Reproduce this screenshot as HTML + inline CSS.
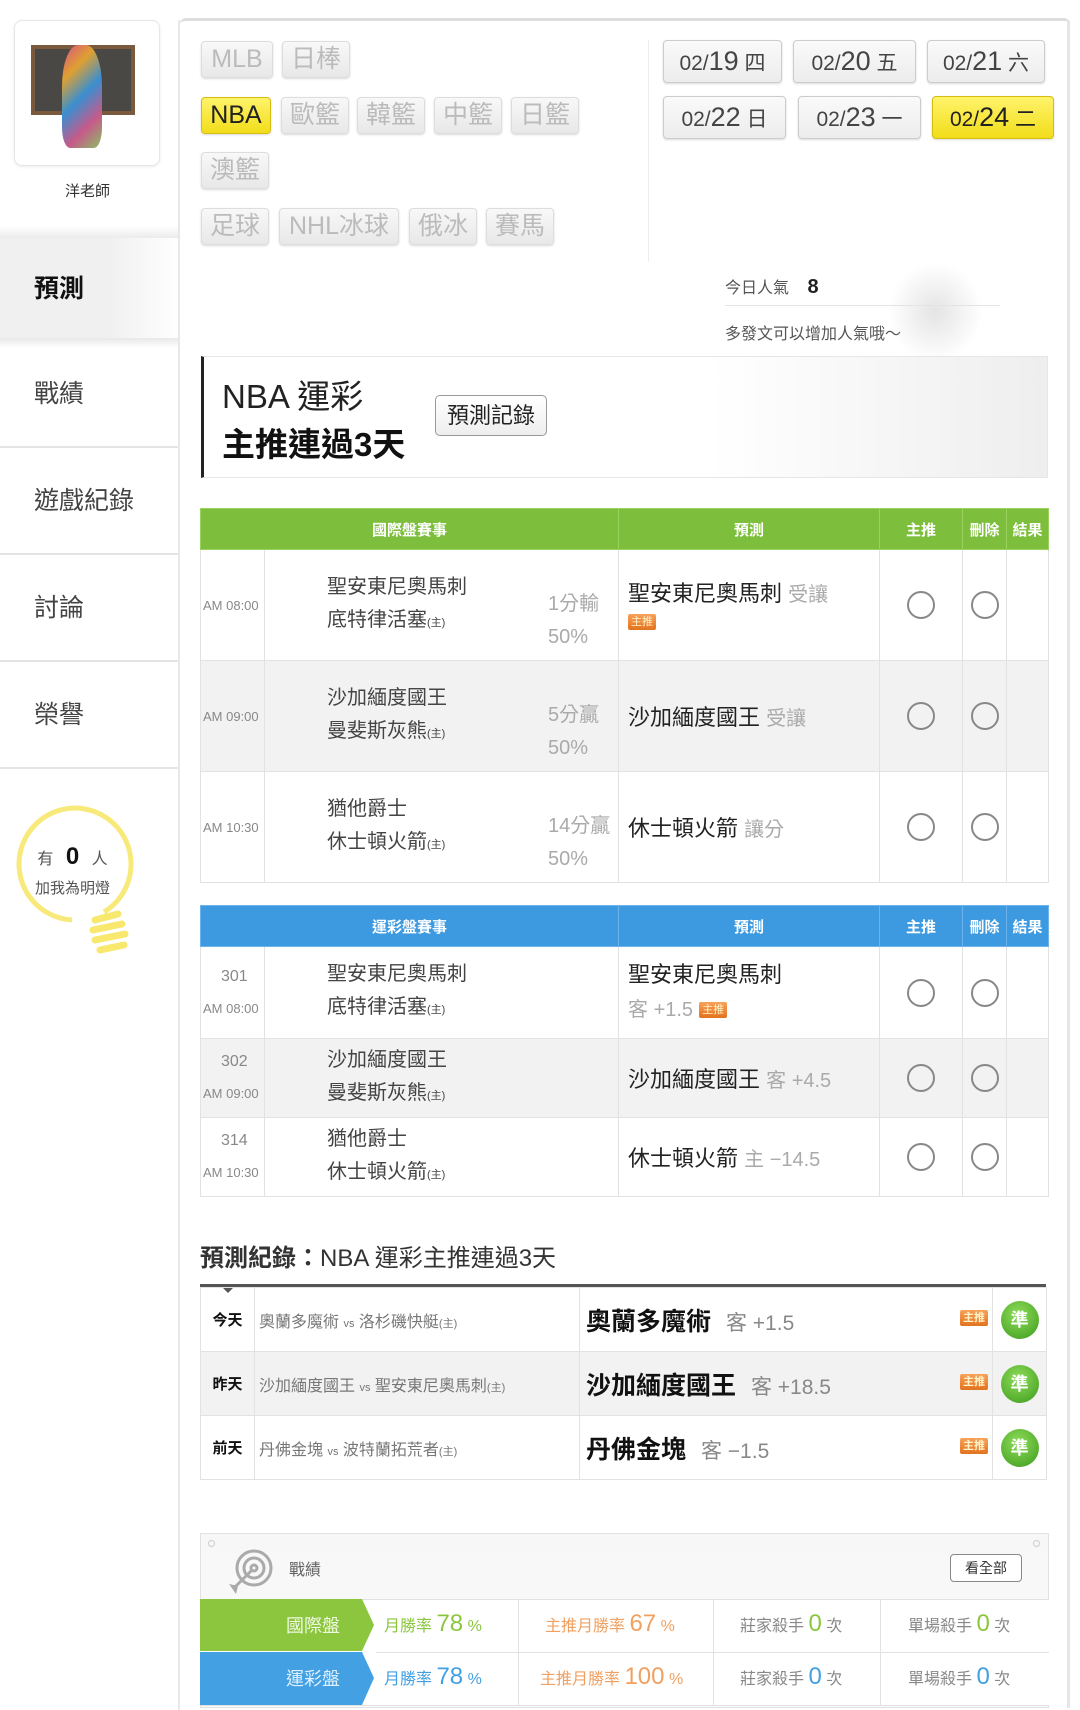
<!DOCTYPE html>
<html><head><meta charset="utf-8">
<style>
*{margin:0;padding:0;box-sizing:border-box}
body{width:1080px;height:1708px;background:#fff;font-family:"Liberation Sans","Noto Sans CJK TC",sans-serif;color:#333;position:relative;overflow:hidden}
.a{position:absolute}
.btn{position:absolute;height:37px;border:1px solid #ddd;border-radius:4px;background:linear-gradient(#f8f8f8,#e8e8e8);color:#bbb;font-size:25px;line-height:35px;text-align:center;box-shadow:0 1px 2px rgba(0,0,0,.15)}
.dt{position:absolute;height:43px;border:1px solid #ccc;border-radius:4px;background:linear-gradient(#fafafa,#ececec);color:#444;font-size:21px;line-height:41px;text-align:center;box-shadow:0 1px 2px rgba(0,0,0,.15)}
.dt b{font-size:27px;font-weight:normal}
.yel{background:linear-gradient(#fff36a,#f2dd1a)!important;border-color:#d4bd10!important;color:#222!important}
.side{position:absolute;left:0;width:180px;height:105px;border-bottom:2px solid #e4e4e4;font-size:25px;color:#444;padding-left:34px;line-height:103px}
table{border-collapse:collapse;position:absolute;left:200px;width:848px;table-layout:fixed}
td,th{border:1px solid #e2e2e2}
th{color:#fff;font-size:15px;font-weight:bold;height:41px}
.g th{background:#7dbf3c;border-color:#9ad15f}
.b th{background:#3e9ae0;border-color:#6bb3ea}
.tm{font-size:13px;color:#888;padding-left:2px}
.tn{font-size:20px;color:#444;line-height:33px;padding-left:62px;position:relative}
.tn small{font-size:11px}
.sc{position:absolute;left:283px;font-size:20px;color:#aaa;line-height:33px}
.pr{font-size:22px;color:#222;padding-left:9px}
.pr span{color:#aaa;font-size:20px}
.circ{width:28px;height:28px;border:2px solid #888;border-radius:50%;margin:auto}
.gy{background:#f2f2f2}
.tag{display:inline-block;background:linear-gradient(#f7a15a,#e2731e);color:#fff3c8!important;font-size:11px!important;line-height:14px;padding:1px 3px;border-radius:2px;vertical-align:middle}
</style></head><body>

<!-- avatar -->
<div class="a" style="left:14px;top:20px;width:146px;height:146px;border:1px solid #e6e6e6;border-radius:8px;box-shadow:0 1px 3px rgba(0,0,0,.08)"></div>
<div class="a" style="left:31px;top:45px;width:104px;height:70px;background:#4a4844;border:4px solid #7a5a3c"></div>
<div class="a" style="left:62px;top:45px;width:40px;height:103px;border-radius:40% 40% 20% 20%;background:linear-gradient(135deg,#d84f8a,#e0a030,#3a8fd0,#c75a8a,#88c060)"></div>
<div class="a" style="left:0;top:180px;width:175px;text-align:center;font-size:15px;color:#333">洋老師</div>

<!-- sidebar -->
<div class="a" style="left:0;top:226px;width:180px;height:14px;background:linear-gradient(#fff,#e8e8e8)"></div>
<div class="side" style="top:238px;background:linear-gradient(90deg,#f0f0f0 60%,#fff);font-weight:bold;color:#111;border-bottom:none">預測</div>
<div class="a" style="left:0;top:338px;width:180px;height:10px;background:linear-gradient(#e8e8e8,#fff)"></div>
<div class="side" style="top:343px">戰績</div>
<div class="side" style="top:450px">遊戲紀錄</div>
<div class="side" style="top:557px">討論</div>
<div class="side" style="top:664px">榮譽</div>
<div class="a" style="left:178px;top:20px;width:2px;height:1690px;background:#e8e8e8"></div>

<!-- bulb -->
<svg class="a" style="left:0;top:800px" width="180" height="170">
<path d="M72 120 A56 56 0 1 1 104 112" fill="none" stroke="#f8ea7a" stroke-width="5"/>
<g stroke="#f8e86e" stroke-width="7" stroke-linecap="round">
<line x1="95" y1="120" x2="118" y2="114"/><line x1="93" y1="130" x2="122" y2="124"/><line x1="95" y1="140" x2="125" y2="134"/><line x1="100" y1="150" x2="124" y2="145"/></g>
</svg>
<div class="a" style="left:0;top:843px;width:145px;text-align:center;font-size:16px;color:#555">有 <b style="font-size:24px;color:#111;margin:0 8px">0</b> 人</div>
<div class="a" style="left:0;top:877px;width:145px;text-align:center;font-size:15px;color:#555">加我為明燈</div>

<!-- main panel top border -->
<div class="a" style="left:180px;top:18px;width:890px;height:8px;border-top:3px solid #ddd;border-radius:6px 6px 0 0"></div>
<div class="a" style="left:1067px;top:20px;width:3px;height:1688px;background:#e6e6e6"></div>

<!-- sport buttons -->
<div class="btn" style="left:201px;top:41px;width:72px">MLB</div>
<div class="btn" style="left:282px;top:41px;width:68px">日棒</div>
<div class="btn yel" style="left:201px;top:97px;width:70px">NBA</div>
<div class="btn" style="left:281px;top:97px;width:68px">歐籃</div>
<div class="btn" style="left:357px;top:97px;width:68px">韓籃</div>
<div class="btn" style="left:434px;top:97px;width:68px">中籃</div>
<div class="btn" style="left:511px;top:97px;width:68px">日籃</div>
<div class="btn" style="left:201px;top:152px;width:68px">澳籃</div>
<div class="btn" style="left:201px;top:208px;width:68px">足球</div>
<div class="btn" style="left:279px;top:208px;width:120px">NHL冰球</div>
<div class="btn" style="left:409px;top:208px;width:68px">俄冰</div>
<div class="btn" style="left:486px;top:208px;width:68px">賽馬</div>
<div class="a" style="left:648px;top:40px;width:1px;height:222px;background:#eee"></div>

<!-- dates -->
<div class="dt" style="left:663px;top:40px;width:119px">02/<b>19</b> 四</div>
<div class="dt" style="left:793px;top:40px;width:123px">02/<b>20</b> 五</div>
<div class="dt" style="left:927px;top:40px;width:118px">02/<b>21</b> 六</div>
<div class="dt" style="left:663px;top:96px;width:123px">02/<b>22</b> 日</div>
<div class="dt" style="left:798px;top:96px;width:123px">02/<b>23</b> 一</div>
<div class="dt yel" style="left:932px;top:96px;width:122px">02/<b>24</b> 二</div>

<!-- popularity -->
<div class="a" style="left:725px;top:274px;font-size:16px;color:#555">今日人氣 <b style="font-size:20px;color:#222;margin-left:14px">8</b></div>
<div class="a" style="left:725px;top:305px;width:275px;height:1px;background:#e4e4e4"></div>
<div class="a" style="left:725px;top:320px;font-size:16px;color:#555">多發文可以增加人氣哦～</div>
<div class="a" style="left:888px;top:262px;width:95px;height:100px;border-radius:50%;background:radial-gradient(#e4e4e4,rgba(255,255,255,0) 70%)"></div>

<!-- NBA banner -->
<div class="a" style="left:201px;top:356px;width:847px;height:122px;border:1px solid #e6e6e6;border-left:3px solid #222;background:linear-gradient(90deg,#fff 60%,#eee)"></div>
<div class="a" style="left:222px;top:370px;font-size:33px;color:#222">NBA 運彩</div>
<div class="a" style="left:222px;top:418px;font-size:33px;color:#111;font-weight:bold">主推連過3天</div>
<div class="a" style="left:435px;top:395px;width:112px;height:41px;border:1px solid #999;border-radius:5px;background:linear-gradient(#fff,#eee);font-size:22px;line-height:39px;text-align:center;color:#222">預測記錄</div>

<!-- table 1 -->
<table class="g" style="top:508px">
<colgroup><col style="width:64px"><col style="width:354px"><col style="width:261px"><col style="width:83px"><col style="width:44px"><col style="width:42px"></colgroup>
<tr><th colspan="2">國際盤賽事</th><th>預測</th><th>主推</th><th>刪除</th><th>結果</th></tr>
<tr style="height:111px"><td class="tm">AM 08:00</td><td class="tn">聖安東尼奧馬刺<br>底特律活塞<small>(主)</small><div class="sc" style="top:38px">1分輸<br>50%</div></td><td class="pr">聖安東尼奧馬刺 <span>受讓</span><br><span class="tag">主推</span></td><td><div class="circ"></div></td><td><div class="circ"></div></td><td></td></tr>
<tr class="gy" style="height:111px"><td class="tm">AM 09:00</td><td class="tn">沙加緬度國王<br>曼斐斯灰熊<small>(主)</small><div class="sc" style="top:38px">5分贏<br>50%</div></td><td class="pr">沙加緬度國王 <span>受讓</span></td><td><div class="circ"></div></td><td><div class="circ"></div></td><td></td></tr>
<tr style="height:111px"><td class="tm">AM 10:30</td><td class="tn">猶他爵士<br>休士頓火箭<small>(主)</small><div class="sc" style="top:38px">14分贏<br>50%</div></td><td class="pr">休士頓火箭 <span>讓分</span></td><td><div class="circ"></div></td><td><div class="circ"></div></td><td></td></tr>
</table>

<!-- table 2 -->
<table class="b" style="top:905px">
<colgroup><col style="width:64px"><col style="width:354px"><col style="width:261px"><col style="width:83px"><col style="width:44px"><col style="width:42px"></colgroup>
<tr><th colspan="2">運彩盤賽事</th><th>預測</th><th>主推</th><th>刪除</th><th>結果</th></tr>
<tr style="height:92px"><td class="tm" style="line-height:32px"><span style="font-size:16px;padding-left:18px">301</span><br>AM 08:00</td><td class="tn">聖安東尼奧馬刺<br>底特律活塞<small>(主)</small></td><td class="pr" style="line-height:34px">聖安東尼奧馬刺<br><span>客 +1.5</span> <span class="tag">主推</span></td><td><div class="circ"></div></td><td><div class="circ"></div></td><td></td></tr>
<tr class="gy" style="height:79px"><td class="tm" style="line-height:32px"><span style="font-size:16px;padding-left:18px">302</span><br>AM 09:00</td><td class="tn">沙加緬度國王<br>曼斐斯灰熊<small>(主)</small></td><td class="pr">沙加緬度國王 <span>客 +4.5</span></td><td><div class="circ"></div></td><td><div class="circ"></div></td><td></td></tr>
<tr style="height:79px"><td class="tm" style="line-height:32px"><span style="font-size:16px;padding-left:18px">314</span><br>AM 10:30</td><td class="tn">猶他爵士<br>休士頓火箭<small>(主)</small></td><td class="pr">休士頓火箭 <span>主 −14.5</span></td><td><div class="circ"></div></td><td><div class="circ"></div></td><td></td></tr>
</table>

<!-- record -->
<div class="a" style="left:200px;top:1238px;font-size:24px;color:#333"><b>預測紀錄：</b>NBA 運彩主推連過3天</div>
<div class="a" style="left:200px;top:1284px;width:846px;height:3px;background:#555"></div>
<div class="a" style="left:222px;top:1287px;width:0;height:0;border:6px solid transparent;border-top-color:#555"></div>
<table style="top:1287px;width:846px">
<colgroup><col style="width:54px"><col style="width:325px"><col style="width:413px"><col style="width:54px"></colgroup>
<tr style="height:64px"><td style="font-size:15px;font-weight:bold;text-align:center;color:#111">今天</td><td style="font-size:16px;color:#777;padding-left:4px">奧蘭多魔術 <small style="font-size:11px">vs</small> 洛杉磯快艇<small style="font-size:11px">(主)</small></td><td style="font-size:25px;font-weight:bold;color:#111;padding-left:6px;position:relative">奧蘭多魔術 <span style="font-weight:normal;color:#888;font-size:21px;margin-left:8px">客 +1.5</span><span class="tag" style="position:absolute;right:4px;top:22px">主推</span></td><td><div style="width:38px;height:38px;border-radius:50%;background:radial-gradient(circle at 45% 35%,#8fdc5a,#3d9a1c);margin:auto;color:#fff;text-align:center;line-height:38px;font-size:18px;font-weight:bold">準</div></td></tr>
<tr class="gy" style="height:64px"><td style="font-size:15px;font-weight:bold;text-align:center;color:#111">昨天</td><td style="font-size:16px;color:#777;padding-left:4px">沙加緬度國王 <small style="font-size:11px">vs</small> 聖安東尼奧馬刺<small style="font-size:11px">(主)</small></td><td style="font-size:25px;font-weight:bold;color:#111;padding-left:6px;position:relative">沙加緬度國王 <span style="font-weight:normal;color:#888;font-size:21px;margin-left:8px">客 +18.5</span><span class="tag" style="position:absolute;right:4px;top:22px">主推</span></td><td><div style="width:38px;height:38px;border-radius:50%;background:radial-gradient(circle at 45% 35%,#8fdc5a,#3d9a1c);margin:auto;color:#fff;text-align:center;line-height:38px;font-size:18px;font-weight:bold">準</div></td></tr>
<tr style="height:64px"><td style="font-size:15px;font-weight:bold;text-align:center;color:#111">前天</td><td style="font-size:16px;color:#777;padding-left:4px">丹佛金塊 <small style="font-size:11px">vs</small> 波特蘭拓荒者<small style="font-size:11px">(主)</small></td><td style="font-size:25px;font-weight:bold;color:#111;padding-left:6px;position:relative">丹佛金塊 <span style="font-weight:normal;color:#888;font-size:21px;margin-left:8px">客 −1.5</span><span class="tag" style="position:absolute;right:4px;top:22px">主推</span></td><td><div style="width:38px;height:38px;border-radius:50%;background:radial-gradient(circle at 45% 35%,#8fdc5a,#3d9a1c);margin:auto;color:#fff;text-align:center;line-height:38px;font-size:18px;font-weight:bold">準</div></td></tr>
</table>

<!-- stats -->
<div class="a" style="left:200px;top:1533px;width:849px;height:175px;border:1px solid #e2e2e2;background:linear-gradient(#f7f7f7,#fafafa)"></div>
<div class="a" style="left:208px;top:1540px;width:7px;height:7px;border:1px solid #ccc;border-radius:50%"></div>
<div class="a" style="left:1033px;top:1540px;width:7px;height:7px;border:1px solid #ccc;border-radius:50%"></div>
<svg class="a" style="left:226px;top:1548px" width="50" height="48"><g fill="none" stroke="#aaa" stroke-width="3"><circle cx="28" cy="20" r="17"/><circle cx="28" cy="20" r="10"/><circle cx="28" cy="20" r="3"/><line x1="26" y1="22" x2="8" y2="40"/></g><path d="M3 36 L12 38 L10 46 Z" fill="#aaa"/></svg>
<div class="a" style="left:289px;top:1556px;font-size:16px;color:#666">戰績</div>
<div class="a" style="left:950px;top:1554px;width:72px;height:28px;border:1px solid #888;border-radius:4px;background:#fff;font-size:14px;line-height:26px;text-align:center;color:#333">看全部</div>

<div class="a" style="left:200px;top:1599px;width:849px;height:106px;background:#fff;border-top:1px solid #e2e2e2"></div>
<svg class="a" style="left:200px;top:1599px" width="175" height="106"><path d="M0 0 H162 L174 26 L162 52 H0Z" fill="#8cc63e"/><path d="M0 53 H162 L174 79 L162 106 H0Z" fill="#42a0e3"/></svg>
<div class="a" style="left:200px;top:1612px;width:140px;text-align:right;font-size:18px;color:#eef8e0">國際盤</div>
<div class="a" style="left:200px;top:1665px;width:140px;text-align:right;font-size:18px;color:#e0f0ff">運彩盤</div>
<div class="a" style="left:518px;top:1599px;width:1px;height:106px;background:#e2e2e2"></div>
<div class="a" style="left:713px;top:1599px;width:1px;height:106px;background:#e2e2e2"></div>
<div class="a" style="left:880px;top:1599px;width:1px;height:106px;background:#e2e2e2"></div>
<div class="a" style="left:376px;top:1652px;width:673px;height:1px;background:#e2e2e2"></div>
<div class="a" style="left:200px;top:1705px;width:849px;height:1px;background:#e2e2e2"></div>

<div class="a" style="left:384px;top:1610px;font-size:16px;color:#8cc63e">月勝率 <span style="font-size:24px">78</span> %</div>
<div class="a" style="left:545px;top:1610px;font-size:16px;color:#f0a060">主推月勝率 <span style="font-size:24px">67</span> %</div>
<div class="a" style="left:740px;top:1610px;font-size:16px;color:#888">莊家殺手 <span style="font-size:24px;color:#8cc63e">0</span> 次</div>
<div class="a" style="left:908px;top:1610px;font-size:16px;color:#888">單場殺手 <span style="font-size:24px;color:#8cc63e">0</span> 次</div>
<div class="a" style="left:384px;top:1663px;font-size:16px;color:#42a0e3">月勝率 <span style="font-size:24px">78</span> %</div>
<div class="a" style="left:540px;top:1663px;font-size:16px;color:#f0a060">主推月勝率 <span style="font-size:24px">100</span> %</div>
<div class="a" style="left:740px;top:1663px;font-size:16px;color:#888">莊家殺手 <span style="font-size:24px;color:#42a0e3">0</span> 次</div>
<div class="a" style="left:908px;top:1663px;font-size:16px;color:#888">單場殺手 <span style="font-size:24px;color:#42a0e3">0</span> 次</div>

</body></html>
